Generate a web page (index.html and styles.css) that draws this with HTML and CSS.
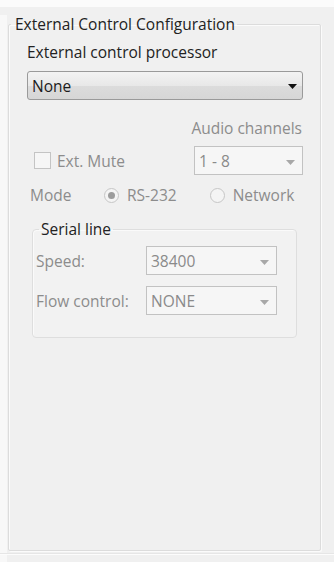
FILE: index.html
```html
<!DOCTYPE html>
<html>
<head>
<meta charset="utf-8">
<link rel="stylesheet" href="styles.css">
</head>
<body>
<div class="topstrip"></div>
<div class="window">
  <fieldset class="group">
    <legend class="group-title">External Control Configuration</legend>
    <div class="label-dark">External control processor</div>
    <div class="select-main">
      <span>None</span>
      <svg class="arrow-black" width="9" height="5" viewBox="0 0 9 5"><path d="M0 0H9L4.5 5Z" fill="#111"/></svg>
    </div>
    <div class="audio-label">Audio channels</div>
    <div class="row-mute">
      <label class="check"><span class="box"></span><span>Ext. Mute</span></label>
      <div class="combo combo-audio"><span>1 - 8</span><svg class="arrow-gray" width="9" height="5" viewBox="0 0 9 5"><path d="M0 0H9L4.5 5Z" fill="#a8a8a8"/></svg></div>
    </div>
    <div class="row-mode">
      <span class="mode-label">Mode</span>
      <span class="radio"><span class="circle on"><span class="dot"></span></span><span>RS-232</span></span>
      <span class="radio radio-net"><span class="circle"></span><span>Network</span></span>
    </div>
    <fieldset class="serial">
      <legend class="serial-title">Serial line</legend>
      <div class="serial-row">
        <span class="serial-label">Speed:</span>
        <div class="combo combo-serial"><span>38400</span><svg class="arrow-gray" width="9" height="5" viewBox="0 0 9 5"><path d="M0 0H9L4.5 5Z" fill="#a8a8a8"/></svg></div>
      </div>
      <div class="serial-row">
        <span class="serial-label">Flow control:</span>
        <div class="combo combo-serial"><span>NONE</span><svg class="arrow-gray" width="9" height="5" viewBox="0 0 9 5"><path d="M0 0H9L4.5 5Z" fill="#a8a8a8"/></svg></div>
      </div>
    </fieldset>
  </fieldset>
  <div class="bottom-line"></div>
</div>
</body>
</html>
```
FILE: styles.css
```css
html, body {
  margin: 0;
  padding: 0;
  background: #f0f0f0;
  font-family: "Open Sans", "Noto Sans", sans-serif;
  font-size: 15.5px;
  color: #8c8c8c;
}
.topstrip {
  height: 7px;
  background: #fbfbfb;
}
.window {
  border-left: 7px solid #f8f8f8;
  height: 555px;
  box-sizing: border-box;
}
.group {
  margin: 0;
  margin-left: 1px;
  width: 313px;
  height: 536px;
  box-sizing: border-box;
  border: 1px solid #dcdcdc;
  border-radius: 2px;
  box-shadow: inset 1px 1px 0 #fbfbfb, 1px 1px 0 #fbfbfb;
  padding: 0 17px 0 18px;
  margin-top: 8px;
}
.group-title {
  padding: 0 2px 0 4px;
  margin-left: -16px;
  color: #222;
  line-height: 18px;
}
.label-dark {
  color: #222;
  line-height: 18px;
  margin-top: 10px;
}
.select-main {
  margin-top: 10px;
  height: 29px;
  box-sizing: border-box;
  border: 1px solid #9a9a9a;
  border-radius: 3px;
  background: linear-gradient(#f3f3f3, #e8e8e8 50%, #dcdcdc 51%, #d6d6d6);
  display: flex;
  align-items: center;
  justify-content: space-between;
  padding: 0 5px 0 4px;
  color: #1c1c1c;
}
.arrow-black {
  margin-top: 2px;
}
.audio-label {
  text-align: right;
  line-height: 18px;
  margin-top: 19px;
  padding-right: 1px;
}
.row-mute {
  display: flex;
  align-items: center;
  justify-content: space-between;
  margin-top: 9px;
}
.check {
  display: flex;
  align-items: center;
  gap: 6px;
  margin-left: 7px;
}
.box {
  width: 17px;
  height: 17px;
  box-sizing: border-box;
  border: 1px solid #c4c4c4;
  background: #f6f6f6;
}
.combo {
  height: 29px;
  box-sizing: border-box;
  border: 1px solid #c2c2c2;
  background: #f6f6f6;
  display: flex;
  align-items: center;
  justify-content: space-between;
  padding: 0 7px 0 4px;
  color: #8a8a8a;
}
.combo-audio {
  width: 109px;
}
.arrow-gray {
  margin-top: 3px;
}
.row-mode {
  display: flex;
  align-items: center;
  margin-top: 11px;
  line-height: 18px;
}
.mode-label {
  margin-left: 3px;
  width: 74px;
}
.radio {
  display: flex;
  align-items: center;
  gap: 8px;
}
.radio-net {
  margin-left: 33px;
}
.circle {
  width: 15px;
  height: 15px;
  box-sizing: border-box;
  border: 1px solid #c6c6c6;
  border-radius: 50%;
  background: #f4f4f4;
  display: flex;
  align-items: center;
  justify-content: center;
}
.dot {
  width: 7px;
  height: 7px;
  border-radius: 50%;
  background: #9c9c9c;
}
.serial {
  margin: 16px 0 0 5px;
  width: 265px;
  height: 118px;
  box-sizing: border-box;
  border: 1px solid #dedede;
  border-radius: 4px;
  box-shadow: inset 1px 1px 0 #fafafa;
  background: #f2f2f2;
  padding: 0 19px 0 3px;
}
.serial-title {
  color: #222;
  padding: 0 2px;
  margin-left: 3px;
  line-height: 18px;
}
.serial-row {
  display: flex;
  align-items: center;
  justify-content: space-between;
}
.serial-row:first-of-type {
  margin-top: 8px;
}
.serial-row + .serial-row {
  margin-top: 11px;
}
.combo-serial {
  width: 131px;
}
.bottom-line {
  height: 1px;
  margin-top: 3px;
  margin-left: -7px;
  background: #fcfcfc;
  box-shadow: 0 -1px 0 #e6e6e6;
}
```
